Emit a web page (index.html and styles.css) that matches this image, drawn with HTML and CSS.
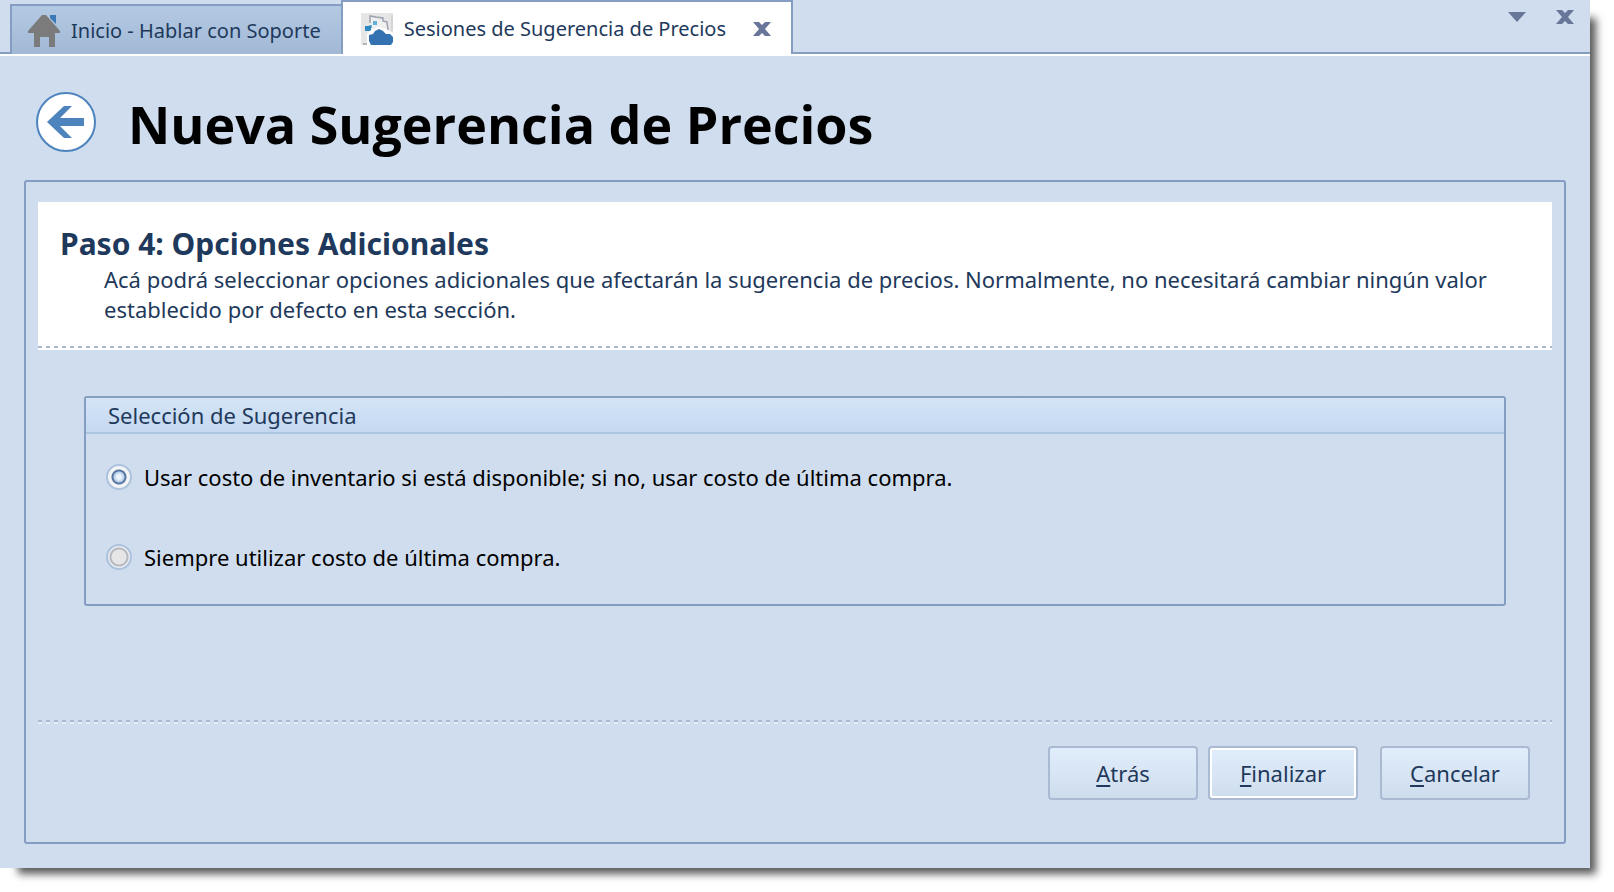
FILE: index.html
```html
<!DOCTYPE html>
<html lang="es">
<head>
<meta charset="utf-8">
<title>Nueva Sugerencia de Precios</title>
<link rel="stylesheet" href="styles.css">
</head>
<body>
<div class="window">
  <nav class="tabbar">
    <a class="tab" href="#inicio">
      <svg class="tab-icon" viewBox="0 0 32 32" aria-hidden="true">
        <path fill="#3c78b4" d="M22 0h6v9l-6-6z"/>
        <path fill="#7b7b7b" d="M14 0h4l14 16v2h-5v14h-6V22h-9v10H6V18H0v-2z"/>
      </svg>
      <span>Inicio - Hablar con Soporte</span>
    </a>
    <div class="tab tab-active">
      <svg class="tab-icon" viewBox="0 0 32 32" aria-hidden="true">
        <path fill="#e6e6e6" d="M0 0h32v32H0z"/>
        <path fill="#efefef" d="M9 4l14 3 4 3 2 12H10z"/>
        <path fill="none" stroke="#9da3ae" stroke-width="1.5" d="M9 10V3l6 1 7 1v3l4 1 1 8"/>
        <path fill="none" stroke="#c4c4c4" d="M31 2v16"/>
        <path fill="#b5b5b5" d="M2 30h4v2H2z"/>
        <path fill="#65b0da" d="M12 8h4v4h-4zM8 12h3v3H8z"/>
        <path fill="#2f89c0" d="M4 13h6v5H4z"/>
        <path fill="#fff" d="M6 21l4-4 7-3 8 2 7 4v12H6z"/>
        <path fill="#3572b2" d="M8 22l4-1 2-3 4-2 4 2 3 3h4l3 3v5l-2 3H10l-2-4z"/>
      </svg>
      <a class="tab-link" href="#sesiones">Sesiones de Sugerencia de Precios</a>
      <button class="icon-button" type="button" aria-label="Cerrar pestaña">
        <svg class="cross" viewBox="0 0 18 14" aria-hidden="true"><path fill="#687799" d="M0 0h6l3 3 3-3h6l-6 7 6 7h-6l-3-3-3 3H0l6-7z"/></svg>
      </button>
    </div>
    <div class="tab-tools">
      <button class="icon-button" type="button" aria-label="Lista de pestañas">
        <svg class="caret" viewBox="0 0 18 10" aria-hidden="true"><path fill="#687799" d="M0 0h18l-9 10z"/></svg>
      </button>
      <button class="icon-button" type="button" aria-label="Cerrar">
        <svg class="cross" viewBox="0 0 18 14" aria-hidden="true"><path fill="#687799" d="M0 0h6l3 3 3-3h6l-6 7 6 7h-6l-3-3-3 3H0l6-7z"/></svg>
      </button>
    </div>
  </nav>

  <header class="page-head">
    <button class="icon-button" type="button" aria-label="Volver">
      <svg class="back-icon" viewBox="0 0 60 60" aria-hidden="true">
        <circle cx="30" cy="30" r="29" fill="#fff" stroke="#4d84bd" stroke-width="2"/>
        <path fill="#4d84bd" d="M11 30l17-16h8L24 26h24v8H24l12 12h-8z"/>
      </svg>
    </button>
    <h1 class="page-title">Nueva Sugerencia de Precios</h1>
  </header>

  <form class="wizard">
    <section class="step">
      <h2 class="step-title">Paso 4: Opciones Adicionales</h2>
      <p class="step-text">Acá podrá seleccionar opciones adicionales que afectarán la sugerencia de precios. Normalmente, no necesitará cambiar ningún valor establecido por defecto en esta sección.</p>
      <div class="rule"></div>
    </section>

    <div class="group" role="radiogroup" aria-labelledby="group-title">
      <h3 class="group-title" id="group-title">Selección de Sugerencia</h3>
      <div class="options">
        <label class="option"><input class="radio" type="radio" name="costo" checked>Usar costo de inventario si está disponible; si no, usar costo de última compra.</label>
        <label class="option"><input class="radio" type="radio" name="costo">Siempre utilizar costo de última compra.</label>
      </div>
    </div>

    <footer class="actions">
      <div class="rule"></div>
      <div class="buttons">
        <button class="button" type="button"><u>A</u>trás</button>
        <button class="button button-default" type="button"><u>F</u>inalizar</button>
        <button class="button button-cancel" type="button"><u>C</u>ancelar</button>
      </div>
    </footer>
  </form>
</div>
</body>
</html>
```

FILE: styles.css
```css
* {
  box-sizing: border-box;
}

body {
  margin: 0;
  background: #fff;
  color: #1e395b;
  font: 22px/30px "Noto Sans", "Open Sans", sans-serif;
}

.window {
  display: flex;
  flex-direction: column;
  min-height: calc(100vh - 24px);
  margin: 0 24px 24px 0;
  background: #cfddee;
  box-shadow: 12px 12px 8px -6px rgba(0, 0, 0, 0.65);
}

/* Tabs */
.tabbar {
  display: flex;
  align-items: flex-end;
  height: 56px;
  padding-left: 10px;
  border-bottom: 2px solid #fff;
  box-shadow: inset 0 -2px #849dc1;
}

.tab {
  display: flex;
  align-items: center;
  gap: 11px;
  height: 50px;
  padding: 2px 20px 0 16px;
  border: 2px solid #849dc1;
  border-width: 2px 0 0 2px;
  background: linear-gradient(#b3c9e3, #a2b9d6);
  color: #1e395b;
  font-size: 20px;
  text-decoration: none;
  white-space: nowrap;
}

.tab-active {
  height: 54px;
  padding: 2px 20px 0 18px;
  border-width: 2px 2px 0;
  background: #fff;
}

.tab-icon {
  width: 32px;
  height: 32px;
}

.tab-link {
  margin-right: 16px;
  color: #1e395b;
  text-decoration: none;
}

.tab-tools {
  display: flex;
  gap: 30px;
  align-self: flex-start;
  align-items: center;
  margin-left: auto;
  padding: 10px 16px 0 0;
}

.icon-button {
  display: flex;
  padding: 0;
  border: 0;
  background: none;
}

.cross {
  width: 18px;
  height: 14px;
}

.caret {
  width: 18px;
  height: 10px;
}

/* Heading */
.page-head {
  display: flex;
  align-items: center;
  gap: 32px;
  height: 124px;
  padding: 8px 36px 0;
}

.back-icon {
  width: 60px;
  height: 60px;
}

.page-title {
  margin: 0;
  padding-top: 4px;
  color: #000;
  font-family: "Open Sans", "Noto Sans", sans-serif;
  font-size: 52px;
  line-height: 60px;
}

/* Wizard panel */
.wizard {
  display: flex;
  flex: 1;
  flex-direction: column;
  margin: 0 24px 24px;
  padding: 20px 12px 42px;
  border: 2px solid #849dc1;
  border-radius: 3px;
}

.step {
  padding-top: 24px;
  background: #fff;
}

.step-title {
  margin: 0;
  padding: 0 22px;
  font-size: 30px;
  line-height: 36px;
}

.step-text {
  margin: 0;
  padding: 2px 32px 22px 66px;
}

.rule {
  height: 4px;
  background:
    repeating-linear-gradient(90deg, #aab8d0 0 4px, transparent 4px 8px) top / 100% 2px no-repeat,
    repeating-linear-gradient(90deg, #e4edf8 0 4px, transparent 4px 8px) bottom / 100% 2px no-repeat;
}

.step .rule {
  background: repeating-linear-gradient(90deg, #aab8d0 0 4px, transparent 4px 8px) top / 100% 2px no-repeat;
}

.group {
  margin: 46px 46px 0;
  border: 2px solid #849dc1;
  border-radius: 3px;
}

.group-title {
  margin: 0;
  padding: 2px 22px;
  border-bottom: 2px solid #adc6e0;
  background: linear-gradient(#d5e5f7, #c4d8f0);
  font-size: 22px;
  font-weight: 400;
}

.options {
  display: grid;
  gap: 50px;
  padding: 28px 20px 32px;
  color: #000;
}

.option {
  display: flex;
  align-items: center;
  gap: 12px;
}

.radio {
  appearance: none;
  width: 26px;
  height: 26px;
  margin: 0;
  border: 2px solid #adc2dd;
  border-radius: 50%;
  background: radial-gradient(circle, #e6e6e6 0 7px, #b5b9bf 8px 9px, #e9edf2 10px);
}

.radio:checked {
  background: radial-gradient(circle, #edf5fc 0 2px, #b7cee8 5px, #5877a3 6px 7px, #f3f4f6 8px);
}

/* Buttons */
.actions {
  margin-top: auto;
}

.buttons {
  display: flex;
  justify-content: flex-end;
  gap: 10px;
  padding: 22px 22px 0;
}

.button {
  width: 150px;
  height: 54px;
  padding: 0;
  border: 2px solid #abbad3;
  border-radius: 4px;
  background: linear-gradient(#e1edfb, #cedded);
  color: #1e395b;
  font: inherit;
}

.button u {
  text-decoration-thickness: 2px;
  text-underline-offset: 3px;
}

.button-default {
  box-shadow: inset 0 0 0 2px #fff;
}

.button-cancel {
  margin-left: 12px;
}
```
